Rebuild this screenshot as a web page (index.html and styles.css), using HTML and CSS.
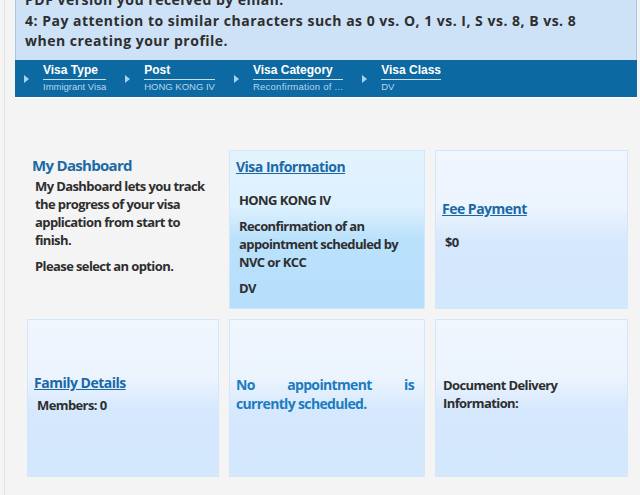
FILE: index.html
```html
<!DOCTYPE html>
<html>
<head>
<meta charset="utf-8">
<title>My Dashboard</title>
<link rel="stylesheet" href="styles.css">
</head>
<body>
<div class="page">
	<div class="notice">
		<p>PDF version you received by email.</p>
		<p>4: Pay attention to similar characters such as 0 vs. O, 1 vs. I, S vs. 8, B vs. 8 when creating your profile.</p>
	</div>

	<ul class="crumbs">
		<li class="crumb">
			<span class="arrow"></span>
			<div class="crumb-text">
				<span class="crumb-label">Visa Type</span>
				<span class="crumb-value">Immigrant Visa</span>
			</div>
		</li>
		<li class="crumb">
			<span class="arrow"></span>
			<div class="crumb-text">
				<span class="crumb-label">Post</span>
				<span class="crumb-value">HONG KONG IV</span>
			</div>
		</li>
		<li class="crumb">
			<span class="arrow"></span>
			<div class="crumb-text">
				<span class="crumb-label">Visa Category</span>
				<span class="crumb-value crumb-short">Reconfirmation of ...</span>
			</div>
		</li>
		<li class="crumb">
			<span class="arrow"></span>
			<div class="crumb-text">
				<span class="crumb-label">Visa Class</span>
				<span class="crumb-value">DV</span>
			</div>
		</li>
	</ul>

	<div class="dashboard">
		<div class="tile tile-intro">
			<h2>My Dashboard</h2>
			<p>My Dashboard lets you track the progress of your visa application from start to finish.</p>
			<p>Please select an option.</p>
		</div>
		<div class="tile tile-top tile-active">
			<a href="#" class="tile-link">Visa Information</a>
			<div class="tile-body tile-gap">
				<p>HONG KONG IV</p>
				<p>Reconfirmation of an appointment scheduled by NVC or KCC</p>
				<p>DV</p>
			</div>
		</div>
		<div class="tile">
			<a href="#" class="tile-link">Fee Payment</a>
			<div class="tile-body tile-gap">
				<p>$0</p>
			</div>
		</div>
		<div class="tile">
			<a href="#" class="tile-link">Family Details</a>
			<div class="tile-body">
				<p>Members: 0</p>
			</div>
		</div>
		<div class="tile">
			<p class="tile-note">No appointment is currently scheduled.</p>
		</div>
		<div class="tile">
			<p class="tile-plain">Document Delivery Information:</p>
		</div>
	</div>
</div>
</body>
</html>
```

FILE: styles.css
```css
body{
	margin: 0;
	background: #f4f4f4;
	font-family: "Open Sans", "DejaVu Sans", sans-serif;
	font-weight: bold;
	color: #2e2e2e;
}
p{
	margin: 0;
}
.page{
	margin-left: 4px;
	min-height: 495px;
	border-left: 1px solid #e2e2e2;
	overflow: hidden;
}

/* notice box, scrolled so its first line is half out of view */
.notice{
	margin: -17px 3px 0 10px;
	padding: 6px 30px 8px 9px;
	background: #cde2f6;
	border: 1px solid #a6c6e6;
	border-bottom: 0;
	font-size: 14px;
	line-height: 20.5px;
	letter-spacing: 0.5px;
}

/* breadcrumb bar */
.crumbs{
	display: flex;
	align-items: center;
	margin: 0 3px 0 10px;
	padding: 3px 0 4px 9px;
	list-style: none;
	background: #0d69a1;
	border-bottom: 1px solid #fff;
	font-family: "Liberation Sans", Arial, sans-serif;
}
.crumb{
	display: flex;
	align-items: center;
	gap: 14px;
	margin-right: 19px;
}
.arrow{
	width: 0;
	height: 0;
	border-left: 5px solid #a9d0ef;
	border-top: 4px solid transparent;
	border-bottom: 4px solid transparent;
	margin-top: 3px;
}
.crumb-text{
	display: flex;
	flex-direction: column;
}
.crumb-label{
	color: #fff;
	font-size: 12px;
	line-height: 14px;
	padding-bottom: 2px;
	border-bottom: 1px solid #c9dfef;
}
.crumb-value{
	color: #b7d6ee;
	font-size: 9.5px;
	font-weight: normal;
	line-height: 13px;
	white-space: nowrap;
}
.crumb-short{
	letter-spacing: 0.25px;
}

/* dashboard tiles */
.dashboard{
	display: grid;
	grid-template-columns: 192px 196px 193px;
	grid-template-rows: 159px 158px;
	gap: 10px;
	margin: 52px 0 0 22px;
}
.tile{
	display: flex;
	flex-direction: column;
	justify-content: center;
	padding: 0 10px 8px 6px;
	border: 1px solid #d3e6fa;
	background: linear-gradient(#f0f6fe 0%, #ecf4fe 36%, #d5e8fd 58%, #d3e7fd 100%);
	font-size: 13px;
	line-height: 18px;
	letter-spacing: -0.6px;
}
.tile-top{
	justify-content: flex-start;
	padding-top: 6px;
}
.tile-active{
	background: linear-gradient(#e3f3fe 0%, #dcf0fe 36%, #bae1fc 56%, #b6dffc 100%);
}
.tile-intro{
	justify-content: flex-start;
	padding: 4px 4px 0 4px;
	background: none;
	border-color: transparent;
}
.tile-intro h2{
	margin: 0 0 2px;
	color: #1d6aa3;
	font-size: 15px;
	line-height: 20px;
	letter-spacing: -0.7px;
}
.tile-intro p{
	padding-left: 3px;
	margin-bottom: 8px;
}
.tile-link{
	color: #1a68a6;
	font-size: 14px;
	line-height: 20px;
	letter-spacing: -0.5px;
}
.tile-body{
	padding-left: 3px;
	margin-top: 3px;
}
.tile-gap{
	margin-top: 14px;
}
.tile-body p + p{
	margin-top: 8px;
}
.tile-note{
	color: #1b7cc0;
	font-size: 14px;
	line-height: 19px;
	text-align: justify;
	letter-spacing: -0.65px;
}
.tile-plain{
	padding-left: 1px;
}
```
